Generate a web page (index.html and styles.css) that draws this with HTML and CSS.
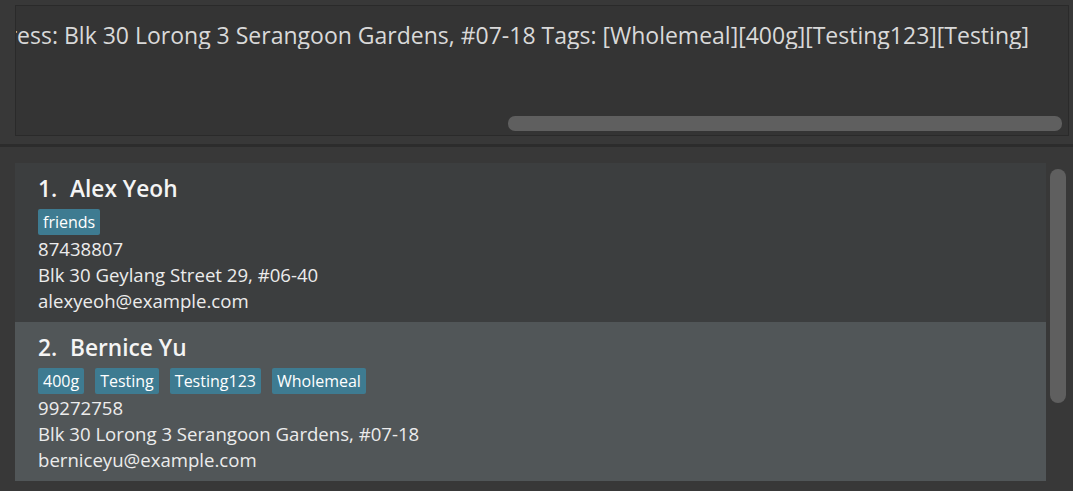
FILE: index.html
```html
<!DOCTYPE html>
<html lang="en">
<head>
<meta charset="utf-8">
<title>Address Book</title>
<link rel="stylesheet" href="styles.css">
</head>
<body>
<div class="app">
  <section class="result-pane">
    <div class="result-box">
      <div class="result-text"><span>Address: Blk 30 Lorong 3 Serangoon Gardens, #07-18 Tags: [Wholemeal][400g][Testing123][Testing]</span></div>
      <div class="h-track"><div class="h-thumb"></div></div>
    </div>
  </section>
  <div class="divider"></div>
  <section class="list-pane">
    <div class="person-list">
      <div class="card card-even">
        <div class="name-row"><span class="index">1.</span><span class="name">Alex Yeoh</span></div>
        <div class="tags"><span class="tag">friends</span></div>
        <div class="line">87438807</div>
        <div class="line">Blk 30 Geylang Street 29, #06-40</div>
        <div class="line">alexyeoh@example.com</div>
      </div>
      <div class="card card-odd">
        <div class="name-row"><span class="index">2.</span><span class="name">Bernice Yu</span></div>
        <div class="tags"><span class="tag">400g</span><span class="tag">Testing</span><span class="tag">Testing123</span><span class="tag">Wholemeal</span></div>
        <div class="line">99272758</div>
        <div class="line">Blk 30 Lorong 3 Serangoon Gardens, #07-18</div>
        <div class="line">berniceyu@example.com</div>
      </div>
    </div>
    <div class="v-track"><div class="v-thumb"></div></div>
  </section>
</div>
</body>
</html>
```
FILE: styles.css
```css
html, body {
  margin: 0;
  padding: 0;
}
body {
  background: #383838;
  font-family: "Open Sans", "Noto Sans", sans-serif;
  width: 1073px;
  height: 491px;
  overflow: hidden;
}
.app {
  display: flex;
  flex-direction: column;
}
.result-pane {
  padding: 5px 4px 8px 15px;
}
.result-box {
  height: 129px;
  border: 1px solid #2a2a2a;
  background: #343434;
  display: flex;
  flex-direction: column;
}
.result-text {
  display: flex;
  justify-content: flex-end;
  overflow: hidden;
  white-space: nowrap;
  padding: 15px 39px 0 0;
  font-size: 23px;
  line-height: 28px;
  color: #d9d9d9;
}
.h-track {
  margin-top: auto;
  margin-bottom: 4px;
  display: flex;
  justify-content: flex-end;
  padding-right: 6px;
}
.h-thumb {
  width: 554px;
  height: 15px;
  border-radius: 7px;
  background: #5f5f5f;
}
.divider {
  height: 3px;
  background: #2c2c2c;
}
.list-pane {
  display: flex;
  padding: 16px 0 0 15px;
}
.person-list {
  width: 1031px;
  display: flex;
  flex-direction: column;
}
.card {
  height: 159px;
  box-sizing: border-box;
  padding: 12px 0 0 23px;
  color: #ececec;
}
.card-even { background: #3c3e3f; }
.card-odd { background: #515658; }
.name-row {
  font-size: 22.7px;
  line-height: 28px;
  font-weight: 600;
  color: #f4f4f4;
  display: flex;
}
.index {
  width: 32px;
}
.tags {
  display: flex;
  gap: 11px;
  margin-top: 6px;
  margin-bottom: 1px;
}
.tag {
  background: #3e7b91;
  color: #ffffff;
  font-size: 16px;
  line-height: 22px;
  padding: 2px 5px;
  border-radius: 2px;
  font-weight: 500;
}
.line {
  font-size: 18.6px;
  line-height: 26px;
}
.v-track {
  padding: 6px 0 0 4px;
}
.v-thumb {
  width: 16px;
  height: 234px;
  border-radius: 8px;
  background: #5f5f5f;
}
```
